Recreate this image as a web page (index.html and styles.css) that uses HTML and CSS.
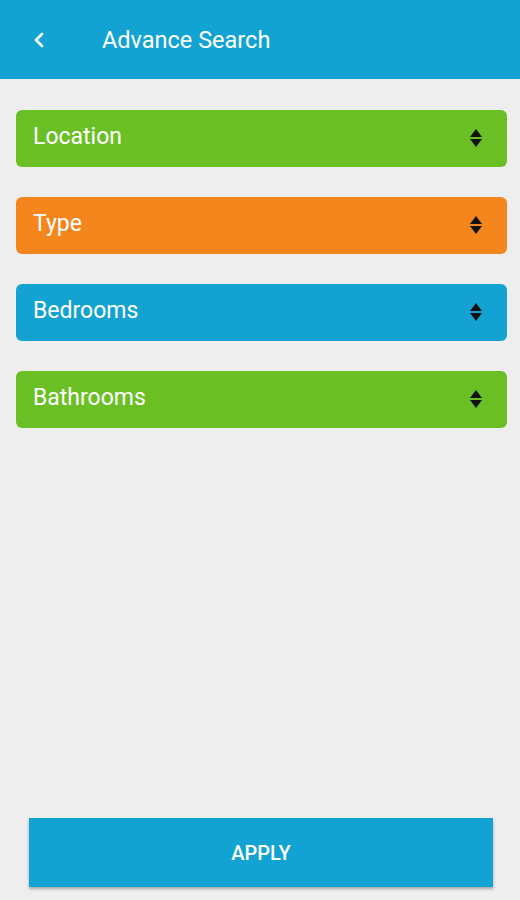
FILE: index.html
```html
<!DOCTYPE html>
<html lang="en">
<head>
  <meta charset="UTF-8">
  <meta name="viewport" content="width=device-width, initial-scale=1.0">
  <title>Advance Search</title>
  <link rel="stylesheet" href="styles.css">
</head>
<body>
  <header class="topbar">
    <button class="back" type="button" aria-label="Back">
      <svg width="14" height="16" viewBox="0 0 14 16"><path d="M10 2 L4 8 L10 14" fill="none" stroke="#fff" stroke-width="2.6" stroke-linecap="round" stroke-linejoin="round"/></svg>
    </button>
    <h1>Advance Search</h1>
  </header>
  <main class="filters">
    <div class="select green"><span>Location</span><i class="sort"></i></div>
    <div class="select orange"><span>Type</span><i class="sort"></i></div>
    <div class="select blue"><span>Bedrooms</span><i class="sort"></i></div>
    <div class="select green"><span>Bathrooms</span><i class="sort"></i></div>
  </main>
  <footer class="actions">
    <button class="apply" type="button">APPLY</button>
  </footer>
</body>
</html>
```

FILE: styles.css
```css
body {
  margin: 0;
  height: 900px;
  display: flex;
  flex-direction: column;
  background-color: #eeeeee;
  font-family: Roboto, "Noto Sans", sans-serif;
}

.topbar {
  height: 79px;
  background-color: #13a3d2;
  display: flex;
  align-items: center;
  color: #fff;
}

.back {
  background: none;
  border: 0;
  padding: 0;
  margin-left: 32px;
  width: 14px;
  display: flex;
}

.topbar h1 {
  margin: 0 0 0 56px;
  font-size: 23.5px;
  font-weight: 400;
}

.filters {
  flex-grow: 1;
  padding: 31px 13px 0 16px;
  display: flex;
  flex-direction: column;
  gap: 30px;
}

.select {
  height: 57px;
  border-radius: 6px;
  display: flex;
  align-items: center;
  justify-content: space-between;
  padding: 0 25px 0 17px;
  color: #fff;
  font-size: 23px;
}

.select span {
  margin-top: -4px;
}

.green { background-color: #6abf24; }
.orange { background-color: #f4861d; }
.blue { background-color: #13a2d1; }

/* up/down sort arrows */
.sort {
  width: 12px;
  height: 22px;
  display: block;
  position: relative;
  margin-top: -2px;
}

.sort::before,
.sort::after {
  content: "";
  position: absolute;
  left: 0;
  border-left: 6px solid transparent;
  border-right: 6px solid transparent;
}

.sort::before {
  top: 2px;
  border-bottom: 8px solid #111;
}

.sort::after {
  top: 12px;
  border-top: 8px solid #111;
}

.actions {
  padding: 0 27px 13px 29px;
}

.apply {
  width: 100%;
  height: 69px;
  border: 0;
  background-color: #13a3d2;
  color: #fff;
  font-family: Roboto, sans-serif;
  font-size: 20px;
  font-weight: 500;
  box-shadow: 0 2px 3px rgba(0, 0, 0, 0.3);
}
```
